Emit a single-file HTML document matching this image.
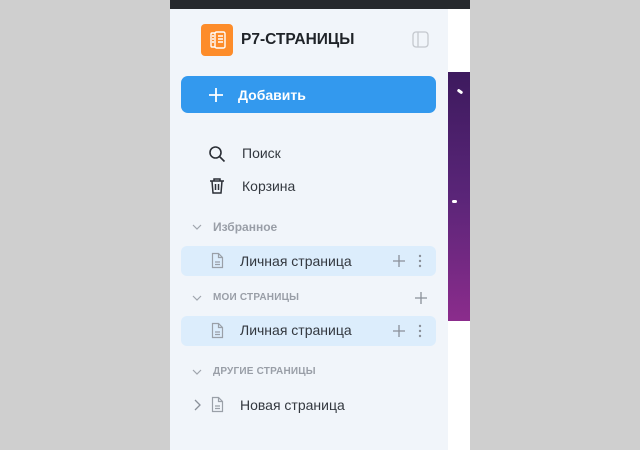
<!DOCTYPE html>
<html><head><meta charset="utf-8"><style>
*{margin:0;padding:0;box-sizing:border-box}
body{width:640px;height:450px;background:#cfcfcf;position:relative;overflow:hidden;font-family:"Liberation Sans",sans-serif}
.abs{position:absolute}
.t{color:#33383f;font-size:14px}
.sec{color:#8a9099;font-size:10px;letter-spacing:.2px;font-weight:bold;opacity:.85}
</style></head><body>
<div class="abs" style="left:170px;top:0;width:300px;height:9px;background:#26292d"></div>
<div class="abs" style="left:170px;top:9px;width:278px;height:441px;background:#f1f5fa"></div>
<div class="abs" style="left:448px;top:9px;width:22px;height:441px;background:#fff"></div>
<div class="abs" style="left:448px;top:72px;width:22px;height:249px;background:linear-gradient(#3d1a5e,#5a2578 50%,#8b2c8c)"></div>
<div class="abs" style="left:457px;top:90px;width:6px;height:3px;background:#fff;border-radius:2px;transform:rotate(35deg)"></div>
<div class="abs" style="left:452px;top:200px;width:5px;height:3px;background:#fff;border-radius:2px"></div>

<div class="abs" style="left:201px;top:24px;width:32px;height:32px;background:#fd8c2a;border-radius:4px"></div>
<svg class="abs" style="left:201px;top:24px" width="32" height="32" viewBox="0 0 32 32" fill="none" stroke="#fff" stroke-width="1.4"><rect x="10" y="9" width="6" height="14" rx="1"/><rect x="14" y="8" width="10" height="16" rx="1.5" fill="#fd8c2a"/><path d="M17 12h5M17 15h5M17 18h5M11 12h2M11 15h2M11 18h2"/></svg>
<div class="abs" style="left:241px;top:31px;font-size:15.5px;font-weight:bold;color:#1f2328">P7-СТРАНИЦЫ</div>
<svg class="abs" style="left:412px;top:31px" width="17" height="17" viewBox="0 0 17 17" fill="none" stroke="#c4c8ce" stroke-width="1.3"><rect x="1" y="1" width="15" height="15" rx="3"/><path d="M6 1v15"/></svg>

<div class="abs" style="left:181px;top:76px;width:255px;height:37px;background:#3399ee;border-radius:7px"></div>
<svg class="abs" style="left:208px;top:87px" width="16" height="16" viewBox="0 0 16 16" stroke="#fff" stroke-width="1.8"><path d="M8 1v14M1 8h14"/></svg>
<div class="abs" style="left:238px;top:87px;color:#fff;font-size:14px;font-weight:bold">Добавить</div>

<svg class="abs" style="left:208px;top:145px" width="18" height="18" viewBox="0 0 18 18" fill="none" stroke="#2b2f36" stroke-width="1.6"><circle cx="7.5" cy="7.5" r="5.5"/><path d="M11.5 11.5l5 5"/></svg>
<div class="abs t" style="left:242px;top:145px">Поиск</div>
<svg class="abs" style="left:208px;top:177px" width="18" height="18" viewBox="0 0 18 18" fill="none" stroke="#2b2f36" stroke-width="1.5"><path d="M2 4h14M6 4V2h6v2M4 4l1 12h8l1-12M7.5 7v6M10.5 7v6"/></svg>
<div class="abs t" style="left:242px;top:178px">Корзина</div>

<svg class="abs" style="left:192px;top:223px" width="10" height="8" viewBox="0 0 10 8" fill="none" stroke="#a0a5ad" stroke-width="1.2"><path d="M1 2l4 4 4-4"/></svg>
<div class="abs" style="left:213px;top:220px;color:#8a9099;font-size:12px;font-weight:bold;opacity:.85">Избранное</div>

<div class="abs" style="left:181px;top:246px;width:255px;height:30px;background:#dcedfc;border-radius:6px"></div>
<div class="abs" style="left:181px;top:316px;width:255px;height:30px;background:#dcedfc;border-radius:6px"></div>

<svg class="abs" style="left:211px;top:252px" width="13" height="17" viewBox="0 0 13 17" fill="none" stroke="#9aa0a8" stroke-width="1.2"><path d="M1.5 1.5h6l4 4v10h-10z M7.5 1.5v4h4M4 10h5M4 12.5h5"/></svg>
<div class="abs t" style="left:240px;top:253px">Личная страница</div>
<svg class="abs" style="left:393px;top:255px" width="12" height="12" viewBox="0 0 12 12" stroke="#8a9099" stroke-width="1.3"><path d="M6 0v12M0 6h12"/></svg>
<svg class="abs" style="left:418px;top:254px" width="4" height="14" viewBox="0 0 4 14" fill="#8a9099"><circle cx="2" cy="2" r="1.2"/><circle cx="2" cy="7" r="1.2"/><circle cx="2" cy="12" r="1.2"/></svg>

<svg class="abs" style="left:192px;top:294px" width="10" height="8" viewBox="0 0 10 8" fill="none" stroke="#a0a5ad" stroke-width="1.2"><path d="M1 2l4 4 4-4"/></svg>
<div class="abs sec" style="left:213px;top:292px">МОИ СТРАНИЦЫ</div>
<svg class="abs" style="left:415px;top:292px" width="12" height="12" viewBox="0 0 12 12" stroke="#8a9099" stroke-width="1.3"><path d="M6 0v12M0 6h12"/></svg>

<svg class="abs" style="left:211px;top:322px" width="13" height="17" viewBox="0 0 13 17" fill="none" stroke="#9aa0a8" stroke-width="1.2"><path d="M1.5 1.5h6l4 4v10h-10z M7.5 1.5v4h4M4 10h5M4 12.5h5"/></svg>
<div class="abs t" style="left:240px;top:322px">Личная страница</div>
<svg class="abs" style="left:393px;top:325px" width="12" height="12" viewBox="0 0 12 12" stroke="#8a9099" stroke-width="1.3"><path d="M6 0v12M0 6h12"/></svg>
<svg class="abs" style="left:418px;top:324px" width="4" height="14" viewBox="0 0 4 14" fill="#8a9099"><circle cx="2" cy="2" r="1.2"/><circle cx="2" cy="7" r="1.2"/><circle cx="2" cy="12" r="1.2"/></svg>

<svg class="abs" style="left:192px;top:368px" width="10" height="8" viewBox="0 0 10 8" fill="none" stroke="#a0a5ad" stroke-width="1.2"><path d="M1 2l4 4 4-4"/></svg>
<div class="abs sec" style="left:213px;top:366px">ДРУГИЕ СТРАНИЦЫ</div>

<svg class="abs" style="left:193px;top:399px" width="8" height="12" viewBox="0 0 8 12" fill="none" stroke="#8a9099" stroke-width="1.3"><path d="M2 1l5 5-5 5"/></svg>
<svg class="abs" style="left:211px;top:396px" width="13" height="17" viewBox="0 0 13 17" fill="none" stroke="#9aa0a8" stroke-width="1.2"><path d="M1.5 1.5h6l4 4v10h-10z M7.5 1.5v4h4M4 10h5M4 12.5h5"/></svg>
<div class="abs t" style="left:240px;top:397px">Новая страница</div>
</body></html>
